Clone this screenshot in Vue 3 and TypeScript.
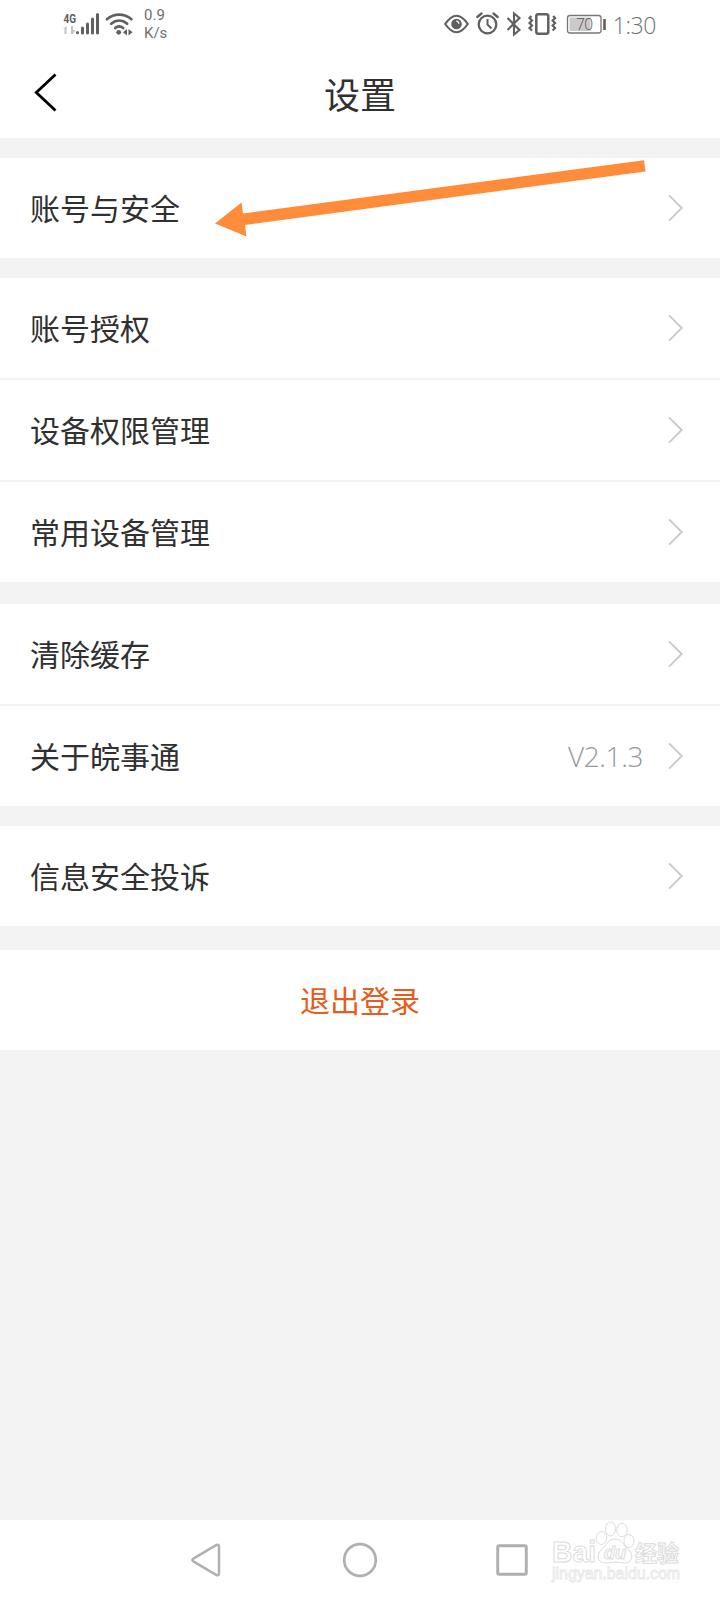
<script setup lang="ts">
interface Row {
  label: string
  value?: string
}

const groups: Row[][] = [
  [{ label: '账号与安全' }],
  [{ label: '账号授权' }, { label: '设备权限管理' }, { label: '常用设备管理' }],
  [{ label: '清除缓存' }, { label: '关于皖事通', value: 'V2.1.3' }],
  [{ label: '信息安全投诉' }],
]
</script>

<template>
  <div class="screen">
    <header class="top">
      <div class="status">
        <div class="status-left">
          <svg class="signal" width="72" height="26" viewBox="0 0 72 26">
            <text class="net" x="0.500" y="11.500" textLength="12.500" lengthAdjust="spacingAndGlyphs">4G</text>
            <g fill="#c4c4c4">
              <path d="M3.500 15v8h-2v-5H0zM8 15v8h2l2.500-4H10v-4z" />
            </g>
            <g stroke="#606060" stroke-width="3" stroke-linecap="round">
              <path d="M14.500 21.500v.2M19.500 17v5M24.500 13v9M29.500 8v14M34.500 3.500v18.500" />
            </g>
            <g fill="none" stroke="#606060" stroke-width="2.700" stroke-linecap="round">
              <path d="M44 8.200c7.300-6 17-6 24.400 0M48.200 12.700c4.900-4 11.100-4 16 0M52.200 17c2.600-2 5.400-2 8 0" />
            </g>
            <circle cx="55.700" cy="21.300" r="2.400" fill="#606060" />
            <path d="M60 21.300l4-3.300v6.600zM69.500 21.300l-4-3.300v6.600z" fill="#606060" />
          </svg>
          <div class="speed"><span>0.9</span><span>K/s</span></div>
        </div>
        <div class="status-right">
          <svg width="166" height="28" viewBox="0 0 166 28" fill="none" stroke="#606060">
            <path d="M1.200 14Q12.500-2.500 23.800 14Q12.500 30.500 1.200 14z" stroke-width="2.200" />
            <circle cx="12.500" cy="14" r="5.300" fill="#606060" stroke="none" />
            <path d="M12.300 11.200q2.400.2 2.600 2.600" stroke="#fff" stroke-width="1.300" />
            <circle cx="43.500" cy="14.500" r="8.800" stroke-width="2.300" />
            <path d="M43.500 9v5.500l4 4" stroke-width="2" />
            <path d="M33.300 7l4.200-3.500M53.700 7l-4.200-3.500" stroke-width="2.300" stroke-linecap="round" />
            <path d="M63.500 8l12 12-5.500 4.500v-21L75.500 8l-12 12" stroke-width="2.100" />
            <rect x="92.300" y="4.200" width="12" height="19.600" rx="2" stroke-width="2.500" />
            <path d="M87.500 6l-2 2 2.500 2.500-2.500 2.500 2.500 2.500-2.500 2.500 2.500 2.500M109.100 6l2 2-2.500 2.500 2.500 2.500-2.500 2.500 2.500 2.500-2.500 2.500" stroke-width="2.200" />
            <rect x="123.500" y="5.500" width="33.500" height="17.500" rx="2.500" stroke="#777" stroke-width="1.300" />
            <rect x="125.500" y="7.500" width="21" height="13.500" fill="#cacaca" stroke="none" />
            <path d="M160.500 9v11" stroke-width="2.600" />
            <text class="charge" x="132" y="20" textLength="17">70</text>
          </svg>
          <span class="clock">1:30</span>
        </div>
      </div>
      <div class="titlebar">
        <svg class="back" width="24" height="40" viewBox="0 0 24 40">
          <path d="M21.500 1.500L2.300 19.500 21.500 37.500" fill="none" stroke="#000" stroke-width="2.800" />
        </svg>
        <h1>设置</h1>
      </div>
    </header>

    <main>
      <section v-for="(group, i) in groups" :key="i" class="group">
        <div v-for="row in group" :key="row.label" class="row">
          <span class="label">{{ row.label }}</span>
          <span v-if="row.value" class="value">{{ row.value }}</span>
          <svg class="chevron" width="16" height="28" viewBox="0 0 16 28">
            <path d="M1 1.300L13.800 14 1 26.700" fill="none" stroke="#c8c8c8" stroke-width="1.800" />
          </svg>
        </div>
      </section>
      <button class="logout"><span>退出登录</span></button>
    </main>

    <nav class="nav">
      <svg width="30" height="36" viewBox="0 0 30 36">
        <path d="M2.300 16.600L25.500 3q2.500-1 2.500 1.500v27q0 2.500-2.500 1.500L2.300 19.400q-1.800-1.400 0-2.800z" fill="none" stroke="#b0b0b0" stroke-width="2.500" />
      </svg>
      <svg width="36" height="36" viewBox="0 0 36 36">
        <circle cx="18" cy="18" r="15.800" fill="none" stroke="#b0b0b0" stroke-width="2.700" />
      </svg>
      <svg width="32" height="32" viewBox="0 0 32 32">
        <rect x="1.700" y="1.700" width="28.600" height="28.600" rx="1.500" fill="none" stroke="#b0b0b0" stroke-width="2.900" />
      </svg>
    </nav>

    <svg class="watermark" width="140" height="66" viewBox="0 0 140 66">
      <g fill="#fff" stroke="#dcdcdc" stroke-width="1">
        <text class="wm-brand" x="2" y="42" textLength="44" lengthAdjust="spacingAndGlyphs">Bai</text>
        <ellipse cx="51.500" cy="18" rx="5.300" ry="6.500" />
        <ellipse cx="60.500" cy="9" rx="5" ry="7" />
        <ellipse cx="72" cy="10" rx="5.200" ry="6.800" />
        <ellipse cx="79" cy="21" rx="5" ry="6.500" />
        <path d="M65 19c-7 0-8 6-13 10-6 5-5 14 3 14 4 0 6-1 10-1s6 1 10 1c8 0 9-9 3-14-5-4-6-10-13-10z" />
        <text class="wm-du" x="54" y="39" textLength="22" lengthAdjust="spacingAndGlyphs">du</text>
        <text class="wm-cjk" x="85" y="40.500" textLength="44">经验</text>
        <text class="wm-url" x="2" y="59" textLength="128" lengthAdjust="spacingAndGlyphs">jingyan.baidu.com</text>
      </g>
    </svg>

    <svg class="arrow" width="436" height="84" viewBox="0 0 436 84">
      <path d="M0 65.500L26.500 44.500 28 55.500 429 2.300 430.500 13.500 30 67 31.500 78.500z" fill="#ff8c3a" />
    </svg>
  </div>
</template>

<style>
body {
  margin: 0;
}
</style>

<style scoped>
.screen {
  position: relative;
  display: flex;
  flex-direction: column;
  width: 720px;
  height: 1600px;
  overflow: hidden;
  background: #f3f3f3;
  color: #303030;
  font-family: "Noto Sans CJK SC", sans-serif;
}
.top {
  height: 138px;
  background: #fff;
}
.status {
  display: flex;
  justify-content: space-between;
  height: 50px;
  padding: 0 64px 0 63px;
  color: #707070;
}
.status-left {
  display: flex;
  align-items: flex-start;
  gap: 9px;
}
.signal {
  margin-top: 11px;
}
.net {
  font: bold 13px Roboto, sans-serif;
  fill: #606060;
}
.speed {
  display: flex;
  flex-direction: column;
  padding-top: 6px;
  font: 400 15px/18px Roboto, sans-serif;
}
.status-right {
  display: flex;
  align-items: flex-start;
}
.status-right svg {
  margin-top: 10px;
}
.charge {
  font: 300 15.500px "Open Sans", sans-serif;
  fill: #505050;
  stroke: none;
}
.clock {
  margin-left: 3px;
  padding-top: 8px;
  font: 300 23px/34px "Open Sans", sans-serif;
  letter-spacing: -0.400px;
}
.titlebar {
  display: grid;
  grid-template-columns: 34px 1fr 34px;
  height: 88px;
}
.back {
  margin: 23px 0 0 34px;
}
h1 {
  margin: 0;
  padding-top: 16px;
  font-size: 36px;
  font-weight: 400;
  line-height: 54px;
  text-align: center;
}
main {
  display: flex;
  flex-direction: column;
  flex: 1;
}
.group {
  display: flex;
  flex-direction: column;
  gap: 2px;
  margin-top: 20px;
}
.group:nth-child(3) {
  margin-top: 22px;
}
.row {
  display: flex;
  align-items: center;
  height: 100px;
  padding: 0 36px 0 30px;
  background: #fff;
}
.label {
  flex: 1;
  padding-bottom: 3px;
  font-size: 30px;
  line-height: 44px;
}
.value {
  margin-right: 25px;
  color: #999;
  font: 300 28px/40px "Open Sans", sans-serif;
  letter-spacing: -0.400px;
}
.logout {
  height: 100px;
  margin-top: 24px;
  padding: 0 0 3px;
  border: 0;
  background: #fff;
  color: #e55d1c;
  font: 400 30px/44px "Noto Sans CJK SC", sans-serif;
}
.nav {
  display: flex;
  align-items: center;
  box-sizing: border-box;
  height: 80px;
  padding-left: 191px;
  background: #fff;
}
.nav svg:nth-child(2) {
  margin-left: 121px;
}
.nav svg:nth-child(3) {
  margin-left: 118px;
}
.arrow {
  position: absolute;
  left: 215px;
  top: 158px;
}
.watermark {
  position: absolute;
  left: 550px;
  top: 1520px;
}
.wm-brand {
  font: bold 29px "Liberation Sans", sans-serif;
}
.wm-du {
  font: italic bold 19px "Liberation Sans", sans-serif;
}
.wm-cjk {
  font: bold 22px "Noto Sans CJK SC", sans-serif;
}
.wm-url {
  font: 16px "Liberation Sans", sans-serif;
  stroke: #e6e6e6;
  stroke-width: 0.800px;
}
</style>
